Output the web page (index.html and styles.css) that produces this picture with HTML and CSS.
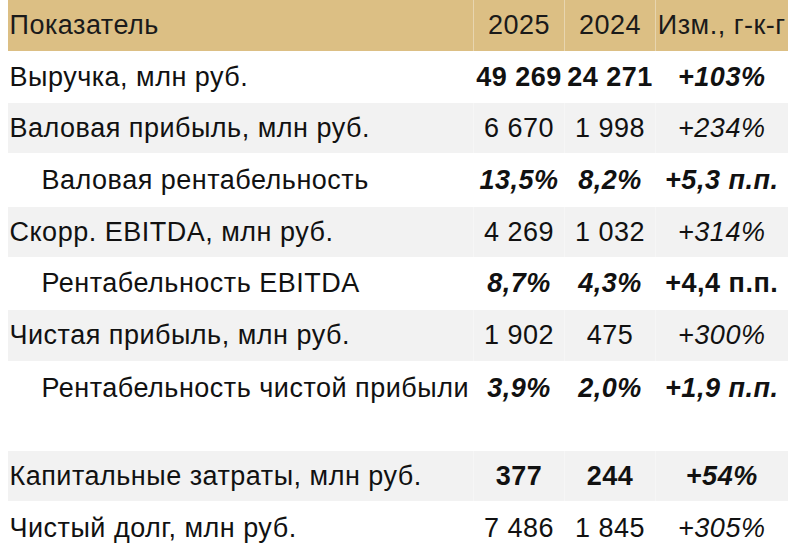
FILE: index.html
```html
<!DOCTYPE html>
<html lang="ru">
<head>
<meta charset="utf-8">
<link rel="stylesheet" href="styles.css">
</head>
<body>
<table class="fin">
  <colgroup>
    <col class="c-label"><col class="c-num"><col class="c-num"><col class="c-chg">
  </colgroup>
  <thead>
    <tr class="head">
      <th class="label">Показатель</th><th>2025</th><th>2024</th><th>Изм., г-к-г</th>
    </tr>
  </thead>
  <tbody>
    <tr class="r1">
      <td class="label">Выручка, млн руб.</td><td class="b">49 269</td><td class="b">24 271</td><td class="bi">+103%</td>
    </tr>
    <tr class="gray r2">
      <td class="label">Валовая прибыль, млн руб.</td><td>6 670</td><td>1 998</td><td class="i">+234%</td>
    </tr>
    <tr class="r3">
      <td class="label sub">Валовая рентабельность</td><td class="bi">13,5%</td><td class="bi">8,2%</td><td class="bi">+5,3 п.п.</td>
    </tr>
    <tr class="gray r4">
      <td class="label">Скорр. EBITDA, млн руб.</td><td>4 269</td><td>1 032</td><td class="i">+314%</td>
    </tr>
    <tr class="r5">
      <td class="label sub">Рентабельность EBITDA</td><td class="bi">8,7%</td><td class="bi">4,3%</td><td class="b">+4,4 п.п.</td>
    </tr>
    <tr class="gray r6">
      <td class="label">Чистая прибыль, млн руб.</td><td>1 902</td><td>475</td><td class="i">+300%</td>
    </tr>
    <tr class="r7">
      <td class="label sub">Рентабельность чистой прибыли</td><td class="bi">3,9%</td><td class="bi">2,0%</td><td class="bi">+1,9 п.п.</td>
    </tr>
    <tr class="spacer"><td colspan="4"></td></tr>
    <tr class="gray r8">
      <td class="label">Капитальные затраты, млн руб.</td><td class="b">377</td><td class="b">244</td><td class="bi">+54%</td>
    </tr>
    <tr class="r9">
      <td class="label">Чистый долг, млн руб.</td><td>7 486</td><td>1 845</td><td class="i">+305%</td>
    </tr>
  </tbody>
</table>
</body>
</html>
```
FILE: styles.css
```css
html, body {
  margin: 0;
  padding: 0;
  background: #ffffff;
}
body {
  font-family: "Liberation Sans", Arial, sans-serif;
  font-size: 27px;
  letter-spacing: 0.5px;
  color: #111111;
}
.fin {
  margin-left: 7px;
  border-collapse: collapse;
  table-layout: fixed;
  width: 780px;
}
.c-label { width: 466px; }
.c-num { width: 91px; }
.c-chg { width: 132px; }
.fin th, .fin td {
  padding: 0;
  text-align: center;
  vertical-align: middle;
  white-space: nowrap;
  font-weight: normal;
  border-left: 1px solid rgba(255,255,255,0.35);
}
.fin th.label, .fin td.label {
  text-align: left;
  padding-left: 2px;
  border-left: none;
}
.fin td.sub { padding-left: 34px; }
.head { background: #dcbf84; height: 51px; }
.fin .head th { color: #1a1a1a; }
.gray { background: #f2f2f2; }
.fin .b { font-weight: bold; }
.fin .i { font-style: italic; }
.fin .bi { font-weight: bold; font-style: italic; }
.r1 { height: 52px; }
.r2 { height: 50px; }
.r3 { height: 54px; }
.r4 { height: 50px; }
.r5 { height: 53px; }
.r6 { height: 51px; }
.r7 { height: 54px; }
.spacer { height: 36px; }
.r8 { height: 50px; }
.r9 { height: 54px; }
```
